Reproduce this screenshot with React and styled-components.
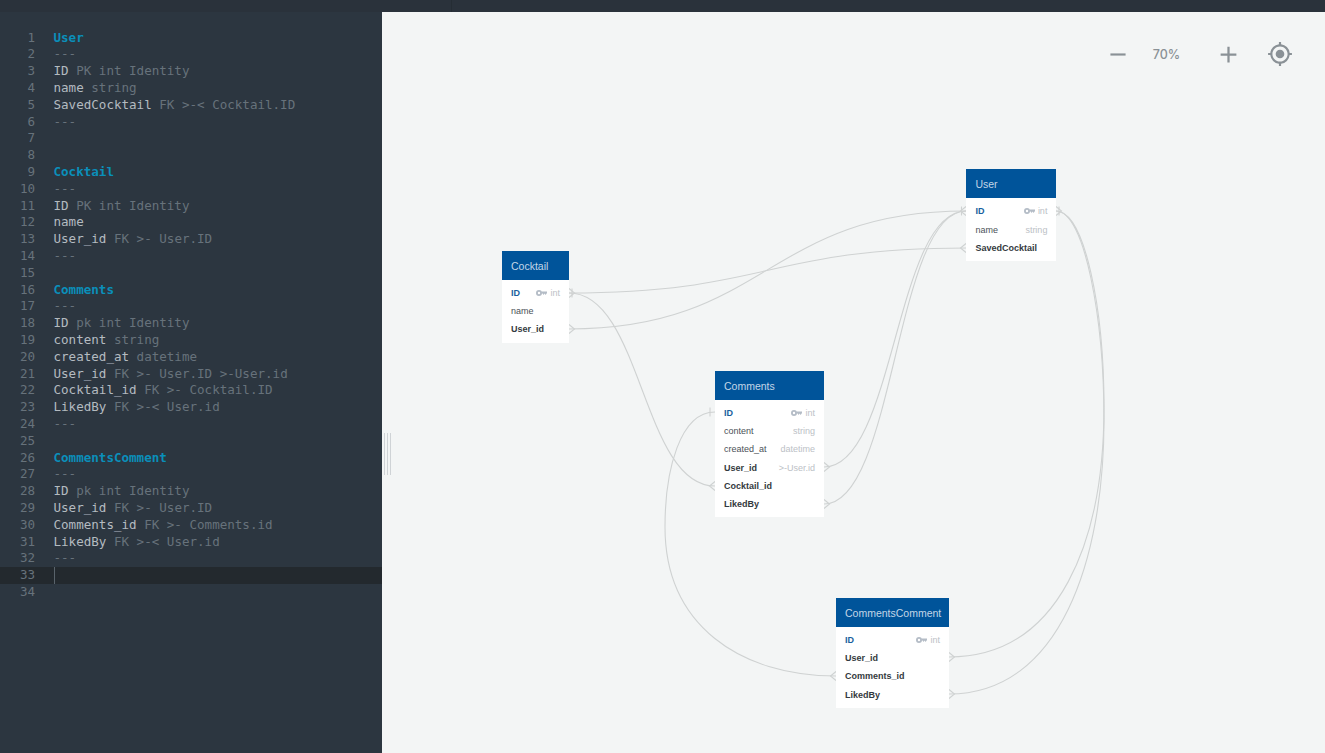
import React from 'react';
import styled, { createGlobalStyle } from 'styled-components';
import { MdAdd, MdRemove, MdGpsFixed } from 'react-icons/md';

const GlobalStyle = createGlobalStyle`
  html, body {
    margin: 0;
    height: 100%;
    overflow: hidden;
    background: #f3f5f5;
  }
  #root {
    height: 100%;
  }
`;

const Page = styled.div`
  display: flex;
  flex-direction: column;
  height: 753px;
`;

const TopBar = styled.div`
  height: 12px;
  flex: none;
  background: #2a323b;
  display: flex;
`;

const TopBarTab = styled.div`
  width: 451px;
  border-right: 1px solid #252d34;
`;

const Main = styled.div`
  flex: 1;
  display: flex;
  min-height: 0;
`;

const Editor = styled.div`
  width: 382px;
  flex: none;
  background: #2c3640;
  padding-top: 17.6px;
  font-family: "DejaVu Sans Mono", monospace;
  font-size: 12.55px;
  overflow: hidden;
`;

const Line = styled.div`
  display: flex;
  height: 16.8px;
  line-height: 16.8px;
  white-space: pre;
  background: ${p => (p.$active ? '#23292e' : 'transparent')};
`;

const LineNumber = styled.div`
  width: 35px;
  flex: none;
  text-align: right;
  color: #67727b;
`;

const Code = styled.div`
  margin-left: 18.5px;
  color: #67727b;
`;

const Name = styled.span`
  color: #b4bbc0;
`;

const TableName = styled.span`
  color: #0a8fba;
  font-weight: bold;
`;

const Cursor = styled.span`
  display: block;
  width: 1px;
  height: 16.8px;
  background: #59636b;
`;

const Canvas = styled.div`
  flex: 1;
  position: relative;
  background: #f3f5f5;
  overflow: hidden;
`;

const Splitter = styled.div`
  position: absolute;
  left: 2px;
  top: 421px;
  width: 5px;
  height: 42px;
  border-left: 1px solid #cfd3d6;
  border-right: 1px solid #cfd3d6;
  display: flex;
  justify-content: center;

  &::before {
    content: '';
    width: 1px;
    background: #cfd3d6;
  }
`;

const Edges = styled.svg`
  position: absolute;
  left: -382px;
  top: -12px;
  width: 1325px;
  height: 753px;
  fill: none;
  stroke: #cfd2d2;
  stroke-width: 1.1;
`;

const Zoom = styled.div`
  position: absolute;
  top: 27px;
  right: 20px;
  display: flex;
  align-items: center;
  color: #8a9196;
  height: 30px;
`;

const ZoomButton = styled.div`
  display: flex;
  width: ${p => p.$w}px;
  justify-content: center;
`;

const ZoomLabel = styled.div`
  width: 70px;
  padding-left: 1px;
  box-sizing: border-box;
  text-align: center;
  font: 500 12.5px Inter, "Liberation Sans", sans-serif;
`;

const Entity = styled.div`
  position: absolute;
  left: ${p => p.$x - 382}px;
  top: ${p => p.$y - 12}px;
  width: ${p => p.$w}px;
  background: #fff;
  font-family: "Liberation Sans", Arial, sans-serif;
  font-size: 9px;
  padding-bottom: 4px;
`;

const EntityHeader = styled.div`
  height: 29px;
  background: #00549a;
  color: #c3d6e7;
  font-size: 10.5px;
  line-height: 30px;
  padding-left: 9px;
  margin-bottom: 4px;
`;

const Row = styled.div`
  display: flex;
  align-items: center;
  height: 18.2px;
  padding: 0 9px;
  color: #4b5157;
`;

const FieldName = styled.div`
  flex: 1;
  font-weight: ${p => (p.$bold ? 'bold' : 'normal')};
  color: ${p => (p.$pk ? '#1a5f9e' : p.$bold ? '#343a40' : '#4b5157')};
`;

const FieldType = styled.div`
  color: #bcc1c6;
  display: flex;
  align-items: center;
  gap: 3px;
`;

const KeyIcon = () => (
  <svg width="11" height="6" viewBox="0 0 11 6" fill="#b4bcc6">
    <path d="M3 0a3 3 0 1 1 0 6 3 3 0 0 1 0-6zm0 1.8a1.2 1.2 0 1 0 0 2.4 1.2 1.2 0 0 0 0-2.4z" fillRule="evenodd" />
    <path d="M5.5 1.4H11v1.5L9.6 5 8.6 3.6 7.6 5 6.6 3.4H5.5z" />
  </svg>
);

const editorLines = [
  { table: 'User' }, { rest: '---' },
  { name: 'ID', rest: ' PK int Identity' },
  { name: 'name', rest: ' string' },
  { name: 'SavedCocktail', rest: ' FK >-< Cocktail.ID' },
  { rest: '---' }, {}, {},
  { table: 'Cocktail' }, { rest: '---' },
  { name: 'ID', rest: ' PK int Identity' },
  { name: 'name' },
  { name: 'User_id', rest: ' FK >- User.ID' },
  { rest: '---' }, {},
  { table: 'Comments' }, { rest: '---' },
  { name: 'ID', rest: ' pk int Identity' },
  { name: 'content', rest: ' string' },
  { name: 'created_at', rest: ' datetime' },
  { name: 'User_id', rest: ' FK >- User.ID >-User.id' },
  { name: 'Cocktail_id', rest: ' FK >- Cocktail.ID' },
  { name: 'LikedBy', rest: ' FK >-< User.id' },
  { rest: '---' }, {},
  { table: 'CommentsComment' }, { rest: '---' },
  { name: 'ID', rest: ' pk int Identity' },
  { name: 'User_id', rest: ' FK >- User.ID' },
  { name: 'Comments_id', rest: ' FK >- Comments.id' },
  { name: 'LikedBy', rest: ' FK >-< User.id' },
  { rest: '---' },
  { active: true }, {},
];

const entities = [
  {
    name: 'Cocktail', x: 502, y: 251, w: 67,
    rows: [
      { name: 'ID', pk: true, type: 'int' },
      { name: 'name' },
      { name: 'User_id', bold: true },
    ],
  },
  {
    name: 'User', x: 966.4, y: 169.4, w: 90,
    rows: [
      { name: 'ID', pk: true, type: 'int' },
      { name: 'name', type: 'string' },
      { name: 'SavedCocktail', bold: true },
    ],
  },
  {
    name: 'Comments', x: 715, y: 371, w: 109,
    rows: [
      { name: 'ID', pk: true, type: 'int' },
      { name: 'content', type: 'string' },
      { name: 'created_at', type: 'datetime' },
      { name: 'User_id', bold: true, type: '>-User.id' },
      { name: 'Cocktail_id', bold: true },
      { name: 'LikedBy', bold: true },
    ],
  },
  {
    name: 'CommentsComment', x: 836, y: 598, w: 113,
    rows: [
      { name: 'ID', pk: true, type: 'int' },
      { name: 'User_id', bold: true },
      { name: 'Comments_id', bold: true },
      { name: 'LikedBy', bold: true },
    ],
  },
];

const edges = [
  'M569 293C767 293 767 248 966 248',
  'M569 329C767 329 767 211 966 211',
  'M569 293C642 293 642 486 715 486',
  'M824 467C895 467 895 211 966 211',
  'M824 504C895 504 895 211 966 211',
  'M715 412C680 412 665 470 665 527C665 625 740 676 836 676',
  'M1056 211C1085 211 1104 310 1104 407C1104 540 1060 657 949 657',
  'M1056 211C1085 211 1104 320 1104 420C1104 560 1060 694 949 694',
];

// dir is the side the line leaves the table on: 1 right, -1 left
const crowFeet = [
  [569, 329, 1], [966, 248, -1], [824, 467, 1], [824, 504, 1],
  [715, 486, -1], [836, 676, -1], [949, 657, 1], [949, 694, 1],
  [569, 293, 1], [966, 211, -1], [1056, 211, 1],
];

const ticks = [
  [572, 293], [961.5, 211], [1059, 211], [710, 412],
];

function App() {
  return (
    <Page>
      <GlobalStyle />
      <TopBar>
        <TopBarTab />
      </TopBar>
      <Main>
        <Editor>
          {editorLines.map((line, i) => (
            <Line key={i} $active={line.active}>
              <LineNumber>{i + 1}</LineNumber>
              <Code>
                {line.active && <Cursor />}
                {line.table && <TableName>{line.table}</TableName>}
                {line.name && <Name>{line.name}</Name>}
                {line.rest}
              </Code>
            </Line>
          ))}
        </Editor>
        <Canvas>
          <Edges viewBox="0 0 1325 753">
            {edges.map((d, i) => <path key={i} d={d} />)}
            {crowFeet.map(([x, y, dir], i) => (
              <path key={i} d={`M${x} ${y - 4.5}L${x + dir * 5.5} ${y}L${x} ${y + 4.5}`} />
            ))}
            {ticks.map(([x, y], i) => (
              <path key={i} d={`M${x} ${y - 4.5}V${y + 4.5}`} />
            ))}
          </Edges>
          {entities.map(entity => (
            <Entity key={entity.name} $x={entity.x} $y={entity.y} $w={entity.w}>
              <EntityHeader>{entity.name}</EntityHeader>
              {entity.rows.map(row => (
                <Row key={row.name}>
                  <FieldName $pk={row.pk} $bold={row.pk || row.bold}>{row.name}</FieldName>
                  {row.type && (
                    <FieldType>
                      {row.pk && <KeyIcon />}
                      {row.type}
                    </FieldType>
                  )}
                </Row>
              ))}
            </Entity>
          ))}
          <Splitter />
          <Zoom>
            <ZoomButton $w={26}><MdRemove size={27} /></ZoomButton>
            <ZoomLabel>70%</ZoomLabel>
            <ZoomButton $w={54}><MdAdd size={27} /></ZoomButton>
            <ZoomButton $w={50}><MdGpsFixed size={26} /></ZoomButton>
          </Zoom>
        </Canvas>
      </Main>
    </Page>
  );
}

export default App;
